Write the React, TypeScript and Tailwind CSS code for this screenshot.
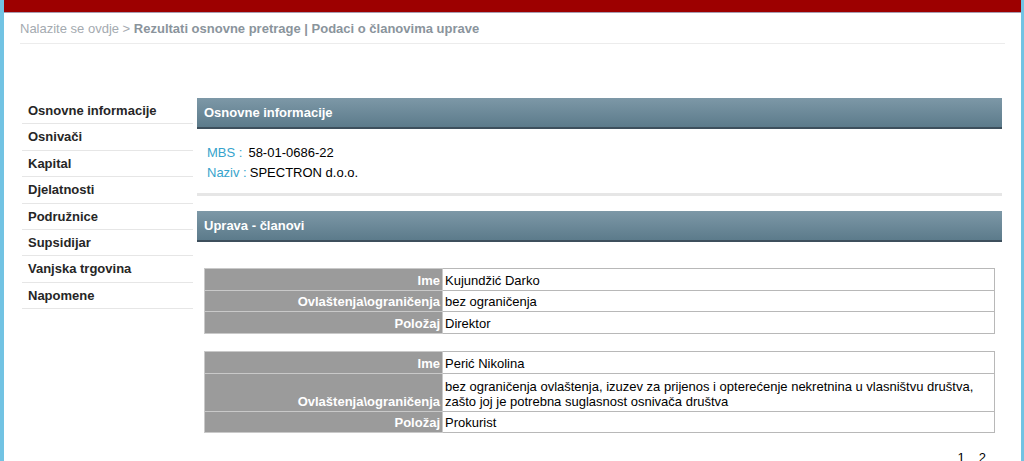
import React from "react";

const menu = [
  "Osnovne informacije",
  "Osnivači",
  "Kapital",
  "Djelatnosti",
  "Podružnice",
  "Supsidijar",
  "Vanjska trgovina",
  "Napomene",
];

type Row = { label: string; value: React.ReactNode; tall?: boolean };

const members: Row[][] = [
  [
    { label: "Ime", value: "Kujundžić Darko" },
    { label: "Ovlaštenja\\ograničenja", value: "bez ograničenja" },
    { label: "Položaj", value: "Direktor" },
  ],
  [
    { label: "Ime", value: "Perić Nikolina" },
    {
      label: "Ovlaštenja\\ograničenja",
      value: (
        <>
          bez ograničenja ovlaštenja, izuzev za prijenos i opterećenje nekretnina u vlasništvu društva,
          <br />
          zašto joj je potrebna suglasnost osnivača društva
        </>
      ),
      tall: true,
    },
    { label: "Položaj", value: "Prokurist" },
  ],
];

function Header({ title }: { title: string }) {
  return (
    <div className="h-[31px] bg-gradient-to-b from-[#7d98a7] to-[#5c7b8b] border-b-2 border-[#3d4f5c] flex items-center pl-[7px] text-white font-bold text-[13px]">
      {title}
    </div>
  );
}

function MemberTable({ rows }: { rows: Row[] }) {
  return (
    <table className="w-[791px] mx-[7px] border-collapse text-[13px] leading-[15px]">
      <tbody>
        {rows.map((r, i) => (
          <tr key={i}>
            <td
              className={`w-[238px] bg-[#9b9b9b] text-white font-bold text-right align-bottom pr-[2px] border border-[#c9c9c9] ${
                r.tall ? "h-[38px] pb-[2px]" : "h-[21.7px] pb-[2px]"
              }`}
            >
              {r.label}
            </td>
            <td className="bg-white text-black align-bottom pl-[2px] pb-[2px] border border-[#b8b8b8]">
              {r.value}
            </td>
          </tr>
        ))}
      </tbody>
    </table>
  );
}

export default function App() {
  return (
    <div
      className="w-[1024px] h-[461px] overflow-hidden bg-white border-l-4 border-r-[3px] border-[#72c3e3] relative"
      style={{ fontFamily: '"Liberation Sans", Arial, sans-serif' }}
    >
      <div className="h-[13px] bg-[#9d0000] border-b border-[#a89cb0]" />
      <div className="mx-[16px] h-[31px] border-b border-[#ececec] flex items-center text-[13px] pt-[2px]">
        <span className="text-[#a4aab0]">Nalazite se ovdje &gt;&nbsp;</span>
        <span className="text-[#8a949c] font-bold">
          Rezultati osnovne pretrage | Podaci o članovima uprave
        </span>
      </div>

      <div className="flex mt-[54px] pl-[18px]">
        <div className="w-[171px] shrink-0">
          {menu.map((m) => (
            <div
              key={m}
              className="h-[26.4px] border-b border-[#e6e6e6] flex items-center pl-[6px] text-[13px] font-bold text-[#262626]"
            >
              {m}
            </div>
          ))}
        </div>

        <div className="w-[805px] ml-[4px]">
          <Header title="Osnovne informacije" />
          <div className="pt-[14px] pl-[10px] text-[13px] leading-[20px] h-[64px]">
            <div>
              <span className="text-[#36a3cc]">MBS :</span>
              <span className="ml-[6px] text-black">58-01-0686-22</span>
            </div>
            <div>
              <span className="text-[#36a3cc]">Naziv :</span>
              <span className="ml-[3px] text-black">SPECTRON d.o.o.</span>
            </div>
          </div>
          <div className="h-[3px] bg-[#e6e6e6]" />
          <div className="h-[15px]" />
          <Header title="Uprava - članovi" />
          <div className="h-[26px]" />
          <MemberTable rows={members[0]} />
          <div className="h-[17px]" />
          <MemberTable rows={members[1]} />
          <div className="flex justify-end pr-[16px] pt-[15px] text-[13px] text-black gap-[14px]">
            <span>1</span>
            <span>2</span>
          </div>
        </div>
      </div>
    </div>
  );
}
